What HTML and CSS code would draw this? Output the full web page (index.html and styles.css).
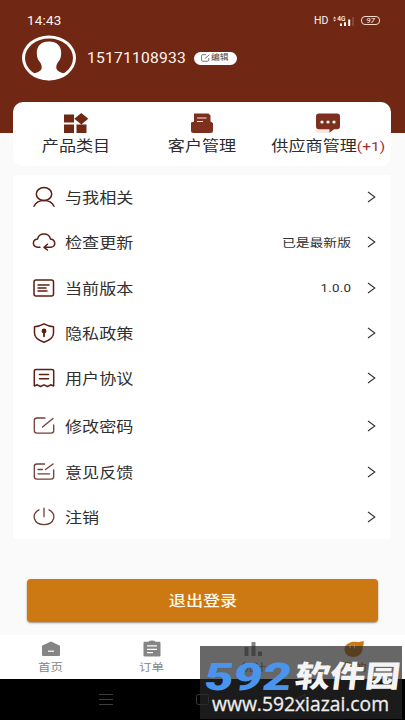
FILE: index.html
```
<!DOCTYPE html>
<html lang="zh-CN">
<head>
<meta charset="utf-8">
<title>我的</title>
<link rel="stylesheet" href="styles.css">
</head>
<body>
<div class="screen">
  <header class="hero">
    <div class="status">
      <span class="clock">14:43</span>
      <span class="hd">HD</span>
      <svg class="signal" width="22" height="12" viewBox="0 0 22 12"><path d="M0 3.4 1.6 1.4 3.2 3.4ZM0 4.8h3.2L1.6 6.6Z" fill="#f3dcd3"/><text x="4.2" y="5.8" font-size="6.5">4G</text><path d="M7 8.5h2V11H7zM11 7.2h2V11h-2zM15.2 4.5h2V11h-2z" fill="#fff"/><path d="M19.300 2h1.400v9h-1.400z" fill="#925444"/></svg>
      <span class="battery">97</span>
    </div>
    <div class="profile">
      <svg class="avatar" width="56" height="46" viewBox="0 0 56 46"><ellipse cx="28" cy="23" rx="27" ry="22.5" fill="#fff"/><ellipse cx="28" cy="23" rx="24" ry="19.6" fill="#702815"/><path d="M28 6.5c-8 0-12.3 4.500-12.200 11.500.1 4.500 1 7 3.400 9.500 1.300 2 1.800 4 1.300 6.500-1 2.500-4 3.500-8 4.500C16.500 43 22 45.200 28 45.200s11.500-2.200 15.500-6.700c-4-1-7-2-8-4.500-.5-2.500 0-4.500 1.300-6.500 2.400-2.500 3.300-5 3.400-9.500C40.300 11 36 6.500 28 6.500Z" fill="#fff"/></svg>
      <span class="phone">15171108933</span>
      <span class="edit"><svg width="9" height="8" viewBox="0 0 9 8"><path d="M5 .7H1.700Q.6.700.6 1.700v4.500q0 1 1.100 1h5q1.100 0 1.100-1V4M4 4.500 8.300.8" fill="none" stroke="#555" stroke-width=".8"/></svg><b>编辑</b></span>
    </div>
  </header>

  <nav class="shortcuts">
    <a><svg width="26" height="21" viewBox="0 0 26 21" fill="#702815"><path d="M1 1.500h10V9.500H1zM1 11.500h10V20H1zM13.500 11.500h10V20h-10zM18.300 0 25.300 5.800 18.300 11.400 11.300 5.800Z"/></svg><span class="wide">产品类目</span></a>
    <a><svg width="26" height="21" viewBox="0 0 26 21"><path d="M5 .5H19.500L21.500 2.500V8.500l2.500 1.500v7.500q0 2.500-2.500 2.500h-17Q2 20 2 17.500V9.500l3-1Z" fill="#7c301d"/><path d="M8 5h9.500M8 8.500h6" fill="none" stroke="#f7e7e1" stroke-width="1.200"/></svg><span class="wide">客户管理</span></a>
    <a><svg width="26" height="21" viewBox="0 0 26 21"><path d="M1 14h14v6H1z" fill="#fbe7e3"/><path d="M4 .5H22Q25 .5 25 3.500V13q0 3.200-3 3.200H19L14.500 19.700V16.200H4Q1 16.200 1 13V3.500Q1 .5 4 .5Z" fill="#7c301d"/><g fill="#fff"><circle cx="7" cy="9" r="1.600"/><circle cx="13" cy="9" r="1.600"/><circle cx="19" cy="9" r="1.600"/></g></svg><span class="wide">供应商管理<i>(+1)</i></span></a>
  </nav>

  <main class="menu">
    <div class="row"><svg class="ico" viewBox="0 0 24 22"><ellipse cx="12" cy="8" rx="7.700" ry="6.600"/><path d="M2 20.300C4 16 8 14.400 12 14.400s8 1.600 10 5.900"/></svg><span class="label">与我相关</span><svg class="arrow" viewBox="0 0 9 12"><path d="M1 1 7.800 6 1 11"/></svg></div>
    <div class="row"><svg class="ico" viewBox="0 0 24 22"><path d="M8 16.300H6C-.3 15.500.2 8.800 5.500 8 7 1.300 17 1.300 18.500 8c5.300.8 5.800 7.500.5 8.300H13M15.500 13.200 12 16.300l3.500 2.700"/></svg><span class="label">检查更新</span><span class="value">已是最新版</span><svg class="arrow" viewBox="0 0 9 12"><path d="M1 1 7.800 6 1 11"/></svg></div>
    <div class="row"><svg class="ico" viewBox="0 0 24 22"><rect x="2" y="3" width="19.500" height="16" rx="2"/><path d="M6 8h11M6 11h8M6 14h9"/></svg><span class="label">当前版本</span><span class="value num">1.0.0</span><svg class="arrow" viewBox="0 0 9 12"><path d="M1 1 7.800 6 1 11"/></svg></div>
    <div class="row"><svg class="ico" viewBox="0 0 24 22"><path d="M12 1.800Q17 4.500 21.500 4.700V11c0 4.500-4.500 7.500-9.500 9.200C7 18.500 2.500 15.500 2.500 11V4.700Q7 4.500 12 1.800Z"/><circle cx="12" cy="9" r="1.700" fill="#601d12"/><path d="M12 9v5.300" stroke-width="1.800"/></svg><span class="label">隐私政策</span><svg class="arrow" viewBox="0 0 9 12"><path d="M1 1 7.800 6 1 11"/></svg></div>
    <div class="row"><svg class="ico" viewBox="0 0 24 22"><path d="M2.300 19V4q0-1.500 2-1.500H19.700q2 0 2 1.500V19l-3-1.200L15.500 19.500 12 17.800 8.500 19.500 5.300 17.800ZM7.500 7.500h9M7.500 11.800h9"/></svg><span class="label">用户协议</span><svg class="arrow" viewBox="0 0 9 12"><path d="M1 1 7.800 6 1 11"/></svg></div>
    <div class="row second"><svg class="ico soft" viewBox="0 0 24 22"><path d="M13 3H5Q2.300 3 2.300 5.300v10.500Q2.300 18.200 5 18.200H19q2.700 0 2.700-2.400V10M10.500 12 21 3.500"/></svg><span class="label">修改密码</span><svg class="arrow" viewBox="0 0 9 12"><path d="M1 1 7.800 6 1 11"/></svg></div>
    <div class="row"><svg class="ico soft" viewBox="0 0 24 22"><path d="M12.500 3H5Q2.300 3 2.300 5.300v10.500Q2.300 18.200 5 18.200H19q2.700 0 2.700-2.400V9M13.500 8.500 21 3M6 8.500h4.500M6 12.800h11.500"/></svg><span class="label">意见反馈</span><svg class="arrow" viewBox="0 0 9 12"><path d="M1 1 7.800 6 1 11"/></svg></div>
    <div class="row"><svg class="ico soft" viewBox="0 0 24 22"><path d="M7 3.800C-1 8 1.300 18.500 12 18.700 22.700 18.500 25 8 17 3.800M12 2.200v8.500"/></svg><span class="label">注销</span><svg class="arrow" viewBox="0 0 9 12"><path d="M1 1 7.800 6 1 11"/></svg></div>
  </main>

  <button class="logout"><span class="wide">退出登录</span></button>

  <nav class="tabs">
    <a><svg width="20" height="18" viewBox="0 0 20 18"><path d="M1 5.800 10 1.500l9 4.300V15q0 1-1 1H2q-1 0-1-1Z" fill="#858585"/><path d="M7 11.200h6" stroke="#fff" stroke-width="1.200"/></svg><span>首页</span></a>
    <a><svg width="20" height="18" viewBox="0 0 20 18"><path d="M2.800 1.700H6.500Q7 .5 10 .5t3.500 1.200h3.700q1.300 0 1.300 1.200V15.500q0 1-1.300 1H2.800q-1.300 0-1.300-1V2.900q0-1.200 1.300-1.200Z" fill="#858585"/><path d="M5 5.800h10M5 9.300h10M5 12.700h6" stroke="#fff" stroke-width="1.300"/></svg><span>订单</span></a>
    <a><svg width="20" height="18" viewBox="0 0 20 18"><path d="M1.500 7h4v9h-4zM8.500 2h4v14h-4zM15 11.500h4V16h-4z" fill="#858585"/></svg><span>统计</span></a>
    <a class="active"><svg width="20" height="18" viewBox="0 0 20 18"><path d="M19.500.8C20 4 19.500 6 18.500 7 19.500 12.500 15 17 9.500 17S.5 13.700.5 9.300 5 2 9.500 1.700C14 1.300 15 3 19.500.8Z" fill="#cc7813"/><path d="M6 5.800v2.500M10.500 5.800v2.500" stroke="#fff" stroke-width="1.200"/></svg><span>我的</span></a>
  </nav>

  <footer class="sysbar">
    <svg width="405" height="41" viewBox="0 0 405 41" fill="none" stroke="#3c3c3c" stroke-width="1"><path d="M99 15.500h14M99 20.500h14M99 25.500h14M305 15.500l-10 5 10 5Z"/><rect x="196.500" y="15.500" width="12" height="10" rx="2"/></svg>
  </footer>

  <div class="watermark">
    <svg width="202" height="73" viewBox="0 0 202 73">
      <text class="mark-num" transform="translate(3 43.500) skewX(-8)" textLength="87" lengthAdjust="spacingAndGlyphs">592</text>
      <text class="mark-cn" transform="translate(94 41) skewX(-7)" textLength="105" lengthAdjust="spacingAndGlyphs">软件园</text>
      <text class="mark-url" x="12" y="65" textLength="177" lengthAdjust="spacingAndGlyphs">www.592xiazai.com</text>
    </svg>
  </div>
</div>
</body>
</html>
```
FILE: styles.css
```
* { box-sizing: border-box; }
body { margin: 0; font-family: Roboto, "Noto Sans CJK SC", sans-serif; }
.screen { position: relative; width: 405px; height: 720px; overflow: hidden; background: #fafafa; display: flex; flex-direction: column; }
.hero { height: 133px; flex: none; background: #702815; color: #fff4ed; }
.status { height: 35px; padding: 6px 25px 0 27px; display: flex; align-items: center; }
.clock { font-size: 12px; width: 30px; transform: scaleX(1.12); transform-origin: left; letter-spacing: .2px; }
.hd { margin-left: auto; font-size: 10.5px; width: 14px; margin-right: 5px; }
.signal { margin-right: 6px; }
.signal text { fill: #fff; font-family: Roboto, sans-serif; font-weight: 500; }
.battery { width: 19px; height: 9px; border: 1px solid #f3ddc9; border-radius: 4px; font-size: 8px; line-height: 7.5px; text-align: center; font-style: italic; }
.profile { display: flex; align-items: center; height: 46px; padding-left: 21px; }
.phone { margin-left: 10px; width: 99px; font-size: 14px; white-space: nowrap; letter-spacing: .2px; transform: scaleX(1.115); transform-origin: left; }
.edit { margin-left: 8px; width: 43px; height: 13px; border-radius: 7px; background: #fff; display: flex; align-items: center; padding-left: 7px; gap: 1px; color: #444; }
.edit b { font-size: 7.5px; font-weight: 400; line-height: 12px; transform: scaleX(1.17); transform-origin: left; }
.shortcuts { flex: none; margin: -31px 14px 0 13px; height: 64px; border-radius: 10px; background: #fff; display: grid; grid-template-columns: repeat(3, 126px); }
.shortcuts a { display: flex; flex-direction: column; align-items: center; padding-top: 11px; color: #2c2c2c; }
.shortcuts svg { flex: none; }
.wide { display: block; white-space: nowrap; font-size: 14.5px; line-height: 22px; transform: scaleX(1.18); }
.shortcuts .wide { margin-top: 2px; }
.shortcuts i { font-style: normal; color: #a52d2c; font-size: 13.2px; }
.menu { flex: none; margin: 9px 14px 0 13px; height: 364px; background: #fff; border-radius: 3px; }
.row { height: 45.25px; display: flex; align-items: center; padding: 0 15px 2px 19px; }
.row.second { margin-top: 3px; }
.ico { width: 24px; height: 22px; fill: none; stroke: #601d12; stroke-width: 1.5; stroke-linecap: round; stroke-linejoin: round; }
.row > svg { position: relative; top: .5px; }
.ico.soft { stroke: #703e36; stroke-width: 1.3; }
.label { margin-left: 9px; margin-right: auto; font-size: 14.5px; color: #303030; transform: scaleX(1.18); transform-origin: left; white-space: nowrap; }
.value { font-size: 11.6px; color: #303030; margin-right: 16px; transform: scaleX(1.19); transform-origin: right; }
.value.num { font-size: 11.8px; letter-spacing: .2px; transform: scaleX(1.13); padding-top: 1px; }
.arrow { width: 9px; height: 12px; fill: none; stroke: #333; stroke-width: 1.1; }
.logout { flex: none; margin: 40px 27px 0; width: 351px; height: 43px; padding: 2px 0 0; border: 0; border-radius: 4px; background: #cc7813; color: #fff8e8; font-family: inherit; box-shadow: 0 1px 2px #9a8a7a; display: flex; align-items: center; justify-content: center; }
.logout .wide { font-weight: 500; }
.tabs { flex: none; margin-top: 13px; height: 44px; background: #fff; display: grid; grid-template-columns: repeat(4, 1fr); }
.tabs a { display: flex; flex-direction: column; align-items: center; padding-top: 5px; color: #858585; }
.tabs span { font-size: 10.5px; line-height: 18px; margin-top: 1px; transform: scaleX(1.19); }
.tabs .active { color: #cc7813; }
.sysbar { flex: none; height: 41px; background: #000; }
.sysbar svg, .watermark svg { display: block; overflow: visible; }
.watermark { position: absolute; left: 200px; top: 646px; width: 202px; height: 73px; background: rgba(38, 38, 38, .7); }
.mark-num { font: 900 38px Roboto, sans-serif; fill: #4995ed; }
.mark-cn { font: 900 30px "Noto Sans CJK SC", sans-serif; fill: #f4f4f4; }
.mark-url { font: 400 20px "Open Sans", sans-serif; fill: #eee; stroke: #eee; stroke-width: .3; }
```
